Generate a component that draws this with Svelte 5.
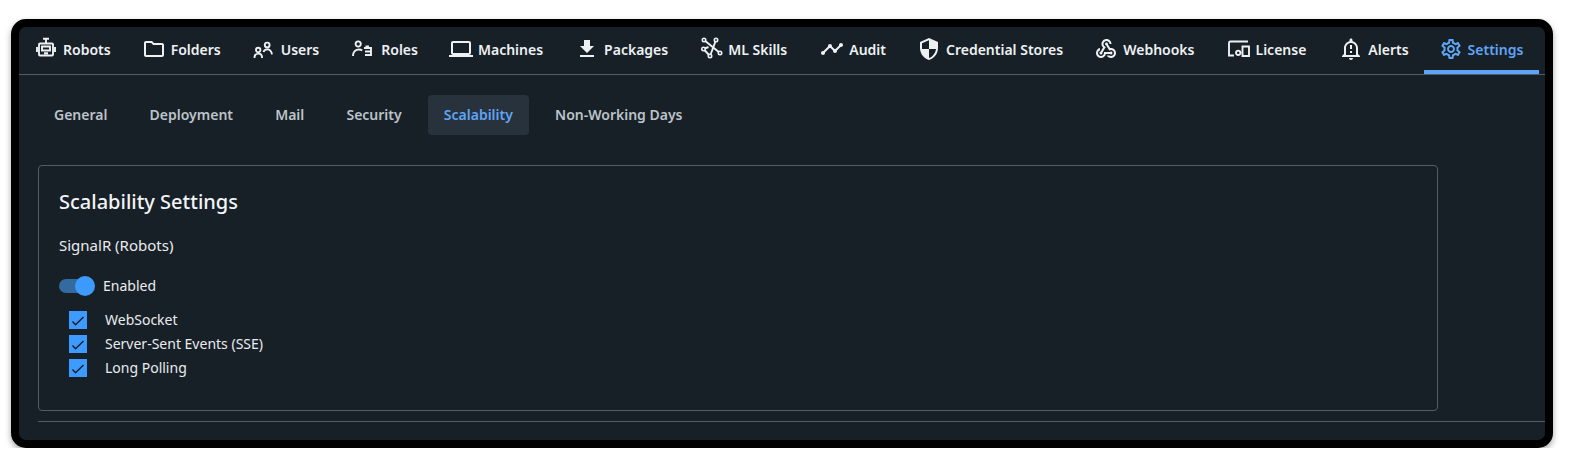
<script>
  const icons = {
    folder: 'M9.17 6l2 2H20v10H4V6h5.17M10 4H4c-1.1 0-1.99.9-1.99 2L2 18c0 1.1.9 2 2 2h16c1.1 0 2-.9 2-2V8c0-1.1-.9-2-2-2h-8l-2-2z',
    laptop: 'M20 18c1.1 0 1.99-.9 1.99-2L22 6c0-1.1-.9-2-2-2H4c-1.1 0-2 .9-2 2v10c0 1.1.9 2 2 2H0v2h24v-2h-4zM4 6h16v10H4V6z',
    download: 'M19 9h-4V3H9v6H5l7 7 7-7zM5 18v2h14v-2H5z',
    timeline: 'M23 8c0 1.1-.9 2-2 2-.18 0-.35-.02-.51-.07l-3.56 3.55c.05.16.07.34.07.52 0 1.1-.9 2-2 2s-2-.9-2-2c0-.18.02-.36.07-.52l-2.55-2.55c-.16.05-.34.07-.52.07s-.36-.02-.52-.07l-4.55 4.56c.05.16.07.33.07.51 0 1.1-.9 2-2 2s-2-.9-2-2 .9-2 2-2c.18 0 .35.02.51.07l4.56-4.55C8.02 9.36 8 9.18 8 9c0-1.1.9-2 2-2s2 .9 2 2c0 .18-.02.36-.07.52l2.55 2.55c.16-.05.34-.07.52-.07s.36.02.52.07l3.55-3.56C19.02 8.35 19 8.18 19 8c0-1.1.9-2 2-2s2 .9 2 2z',
    shield: 'M12 1L3 5v6c0 5.55 3.84 10.74 9 12 5.16-1.26 9-6.45 9-12V5l-9-4zm0 10.99h7c-.53 4.12-3.28 7.79-7 8.94V12H5V6.3l7-3.11v8.8z',
    webhook: 'M10 15h5.88c.27-.31.67-.5 1.12-.5.83 0 1.5.67 1.5 1.5s-.67 1.5-1.5 1.5c-.44 0-.84-.19-1.12-.5H11.9c-.46 2.28-2.48 4-4.9 4-2.76 0-5-2.24-5-5 0-2.42 1.72-4.44 4-4.9v2.07c-1.16.41-2 1.53-2 2.83 0 1.65 1.35 3 3 3s3-1.35 3-3v-1zm2.5-11c1.65 0 3 1.35 3 3h2c0-2.76-2.24-5-5-5s-5 2.24-5 5c0 1.43.6 2.71 1.55 3.62l-2.35 3.9c-.68.14-1.2.75-1.2 1.48 0 .83.67 1.5 1.5 1.5s1.5-.67 1.5-1.5c0-.16-.02-.31-.07-.45l3.38-5.63C10.49 9.61 9.5 8.42 9.5 7c0-1.65 1.35-3 3-3zm4.5 9c-.64 0-1.23.2-1.72.54l-3.05-5.07C11.53 8.35 11 7.74 11 7c0-.83.67-1.5 1.5-1.5S14 6.17 14 7c0 .15-.02.29-.06.43l2.19 3.65c.28-.05.57-.08.87-.08 2.76 0 5 2.24 5 5s-2.24 5-5 5c-1.85 0-3.47-1.01-4.33-2.5h2.67c.48.32 1.05.5 1.66.5 1.65 0 3-1.35 3-3s-1.35-3-3-3z',
    alert: 'M10.01 21.01c0 1.1.89 1.99 1.99 1.99s1.99-.89 1.99-1.99h-3.98zM12 6c2.76 0 5 2.24 5 5v7H7v-7c0-2.76 2.24-5 5-5zm0-4.5c-.83 0-1.5.67-1.5 1.5v1.17C7.36 4.85 5 7.65 5 11v6l-2 2v1h18v-1l-2-2v-6c0-3.35-2.36-6.15-5.5-6.83V3c0-.83-.67-1.5-1.5-1.5zM11 8h2v4h-2zm0 6h2v2h-2z',
    gear: 'M19.43 12.98c.04-.32.07-.64.07-.98 0-.34-.03-.66-.07-.98l2.11-1.65c.19-.15.24-.42.12-.64l-2-3.46c-.09-.16-.26-.25-.44-.25-.06 0-.12.01-.17.03l-2.49 1c-.52-.4-1.08-.73-1.69-.98l-.38-2.65C14.46 2.18 14.25 2 14 2h-4c-.25 0-.46.18-.49.42l-.38 2.65c-.61.25-1.17.59-1.69.98l-2.49-1c-.06-.02-.12-.03-.18-.03-.17 0-.34.09-.43.25l-2 3.46c-.13.22-.07.49.12.64l2.11 1.65c-.04.32-.07.65-.07.98 0 .33.03.66.07.98l-2.11 1.65c-.19.15-.24.42-.12.64l2 3.46c.09.16.26.25.44.25.06 0 .12-.01.17-.03l2.49-1c.52.4 1.08.73 1.69.98l.38 2.65c.03.24.24.42.49.42h4c.25 0 .46-.18.49-.42l.38-2.65c.61-.25 1.17-.59 1.69-.98l2.49 1c.06.02.12.03.18.03.17 0 .34-.09.43-.25l2-3.46c.12-.22.07-.49-.12-.64l-2.11-1.65zm-1.98-1.71c.04.31.05.52.05.73 0 .21-.02.43-.05.73l-.14 1.13.89.7 1.08.84-.7 1.21-1.27-.51-1.04-.42-.9.68c-.43.32-.84.56-1.25.73l-1.06.43-.16 1.13-.2 1.35h-1.4l-.19-1.35-.16-1.13-1.06-.43c-.43-.18-.83-.41-1.23-.71l-.91-.7-1.06.43-1.27.51-.7-1.21 1.08-.84.89-.7-.14-1.13c-.03-.31-.05-.54-.05-.74s.02-.43.05-.73l.14-1.13-.89-.7-1.08-.84.7-1.21 1.27.51 1.04.42.9-.68c.43-.32.84-.56 1.25-.73l1.06-.43.16-1.13.2-1.35h1.39l.19 1.35.16 1.13 1.06.43c.43.18.83.41 1.23.71l.91.7 1.06-.43 1.27-.51.7 1.21-1.07.85-.89.7.14 1.13zM12 8c-2.21 0-4 1.79-4 4s1.79 4 4 4 4-1.79 4-4-1.79-4-4-4zm0 6c-1.1 0-2-.9-2-2s.9-2 2-2 2 .9 2 2-.9 2-2 2z'
  };

  // extra = trailing px so the tab starts land where the original's do
  const tabs = [
    { label: 'Robots', stroke: 'M9 1.8h6M12 1.8V6M6 6.5h12a1 1 0 0 1 1 1v10a1 1 0 0 1-1 1H6a1 1 0 0 1-1-1v-10a1 1 0 0 1 1-1zM8 9.5h8v4H8zM10 16.3h4M3 10v5M21 10v5' },
    { label: 'Folders', fill: icons.folder },
    { label: 'Users', extra: 2, stroke: 'M4 13a2.2 2.2 0 1 0 4.4 0a2.2 2.2 0 1 0-4.4 0zM2.5 21c0-3 1.8-4.4 3.8-4.4s3.8 1.4 3.8 4.4M12.8 8a2.4 2.4 0 1 0 4.8 0a2.4 2.4 0 1 0-4.8 0zM11.5 15c.6-1.6 2-2.6 3.7-2.6 2.3 0 4.2 1.7 4.8 5' },
    { label: 'Roles', stroke: 'M3.6 7a2.6 2.6 0 1 0 5.2 0a2.6 2.6 0 1 0-5.2 0zM1 19c0-4 2.5-6.5 6-6.5 1.2 0 2.3.3 3.2.9M13 18h6v-7h-7M13.5 9.4h3.5M13 14.5h6' },
    { label: 'Machines', extra: 1, fill: icons.laptop },
    { label: 'Packages', fill: icons.download },
    { label: 'ML Skills', extra: 2, stroke: 'M5 3l16 13M17 3l-6 16M4.5 12l6.5 7M4.5 12l5-2', nodes: [[5, 3], [17, 3], [4.5, 12], [21, 16], [11, 19]] },
    { label: 'Audit', fill: icons.timeline },
    { label: 'Credential Stores', fill: icons.shield },
    { label: 'Webhooks', extra: 1, fill: icons.webhook },
    { label: 'License', extra: 2, stroke: 'M21 4.5H3.5A1.5 1.5 0 0 0 2 6v12.5h5M15.5 9.5H22V19h-6.5zM9 15.8a2.2 2.2 0 1 0 4.4 0a2.2 2.2 0 1 0-4.4 0z' },
    { label: 'Alerts', extra: -1, fill: icons.alert },
    { label: 'Settings', fill: icons.gear, active: true }
  ];

  const subTabs = ['General', 'Deployment', 'Mail', 'Security', 'Scalability', 'Non-Working Days'];
  const transports = ['WebSocket', 'Server-Sent Events (SSE)', 'Long Polling'];
</script>

<div class="frame">
  <div class="screen">
    <nav class="tabs">
      {#each tabs as tab}
        <div class="tab" class:active={tab.active} style:margin-right="{tab.extra ?? 0}px">
          <svg viewBox="0 0 24 24" width="24" height="24">
            {#if tab.fill}
              <path d={tab.fill} fill="currentColor" />
            {:else}
              <path d={tab.stroke} fill="none" stroke="currentColor" stroke-width="1.9" />
              {#each tab.nodes ?? [] as n}
                <circle cx={n[0]} cy={n[1]} r="1.7" fill="#182027" stroke="currentColor" stroke-width="1.6" />
              {/each}
            {/if}
          </svg>
          <span>{tab.label}</span>
        </div>
      {/each}
    </nav>

    <div class="content">
      <div class="subtabs">
        {#each subTabs as s}
          <div class="subtab" class:active={s === 'Scalability'}>{s}</div>
        {/each}
      </div>

      <section class="card">
        <h2>Scalability Settings</h2>
        <h3>SignalR (Robots)</h3>
        <div class="toggle-row">
          <span class="toggle"><span class="track"></span><span class="thumb"></span></span>
          <span class="lbl">Enabled</span>
        </div>
        <div class="checks">
          {#each transports as t}
            <label class="check">
              <span class="box">
                <svg viewBox="0 0 18 18" width="18" height="18"><path d="M3.5 10.5l3 3.2 8-7.7" fill="none" stroke="#182027" stroke-width="1.5" /></svg>
              </span>
              <span class="lbl">{t}</span>
            </label>
          {/each}
        </div>
      </section>
    </div>
    <hr class="rule" />
  </div>
</div>

<style>
  :global(body) {
    margin: 0;
    background: #fff;
    font-family: "Noto Sans", sans-serif;
  }
  .frame {
    box-sizing: border-box;
    width: 1542px;
    height: 429px;
    margin: 19px 0 0 11px;
    border: 8px solid #000;
    border-radius: 15px;
    box-shadow: 0 3px 6px rgba(0, 0, 0, 0.35);
    background: #000;
  }
  .screen {
    height: 100%;
    background: #182027;
    border-radius: 7px;
    overflow: hidden;
  }
  .tabs {
    display: flex;
    height: 48px;
    box-sizing: border-box;
    border-bottom: 1px solid #4f5d68;
  }
  .tab {
    display: flex;
    align-items: center;
    gap: 5px;
    padding: 1px 16px 0 15px;
    font-size: 14px;
    font-weight: 600;
    color: #eef1f3;
    box-sizing: border-box;
    border-bottom: 4px solid transparent;
    height: 47px;
  }
  .tab.active {
    color: #5fa5f5;
    border-bottom-color: #5fa5f5;
  }
  .content {
    padding: 20px 107px 0 19px;
  }
  .subtabs {
    display: flex;
    gap: 10.15px;
  }
  .subtab {
    padding: 0 16px;
    height: 40px;
    line-height: 40px;
    font-size: 14px;
    font-weight: 600;
    color: #bcc3c9;
    border-radius: 4px;
  }
  .subtab.active {
    background: #28323c;
    color: #5fa5f5;
  }
  .card {
    box-sizing: border-box;
    height: 246px;
    margin-top: 30px;
    padding: 21px 20px 0;
    border: 1px solid #4f5d68;
    border-radius: 4px;
    color: #e9ecef;
  }
  h2 {
    margin: 0;
    font-size: 20px;
    font-weight: 500;
    line-height: 30px;
    color: #f2f4f6;
  }
  h3 {
    margin: 18px 0 0;
    font-size: 15px;
    font-weight: 400;
    line-height: 20px;
  }
  .toggle-row {
    display: flex;
    align-items: center;
    gap: 8px;
    margin-top: 21px;
    height: 20px;
    font-size: 14px;
  }
  .toggle {
    position: relative;
    width: 36px;
    height: 20px;
  }
  .track {
    position: absolute;
    left: 0;
    top: 3px;
    width: 34px;
    height: 14px;
    border-radius: 7px;
    background: #336a9f;
  }
  .thumb {
    position: absolute;
    right: 0;
    top: 0;
    width: 20px;
    height: 20px;
    border-radius: 50%;
    background: #3d9bff;
  }
  .checks {
    margin: 15px 0 0 10px;
    display: flex;
    flex-direction: column;
    gap: 6px;
  }
  .check {
    display: flex;
    align-items: center;
    gap: 18px;
    height: 18px;
    font-size: 14px;
  }
  .lbl {
    padding-bottom: 2px;
  }
  .box {
    width: 18px;
    height: 18px;
    background: #3d9bff;
    display: block;
  }
  .box svg {
    display: block;
  }
  .rule {
    margin: 10px 0 0 19px;
    border: 0;
    border-top: 1px solid #4f5d68;
  }
</style>
